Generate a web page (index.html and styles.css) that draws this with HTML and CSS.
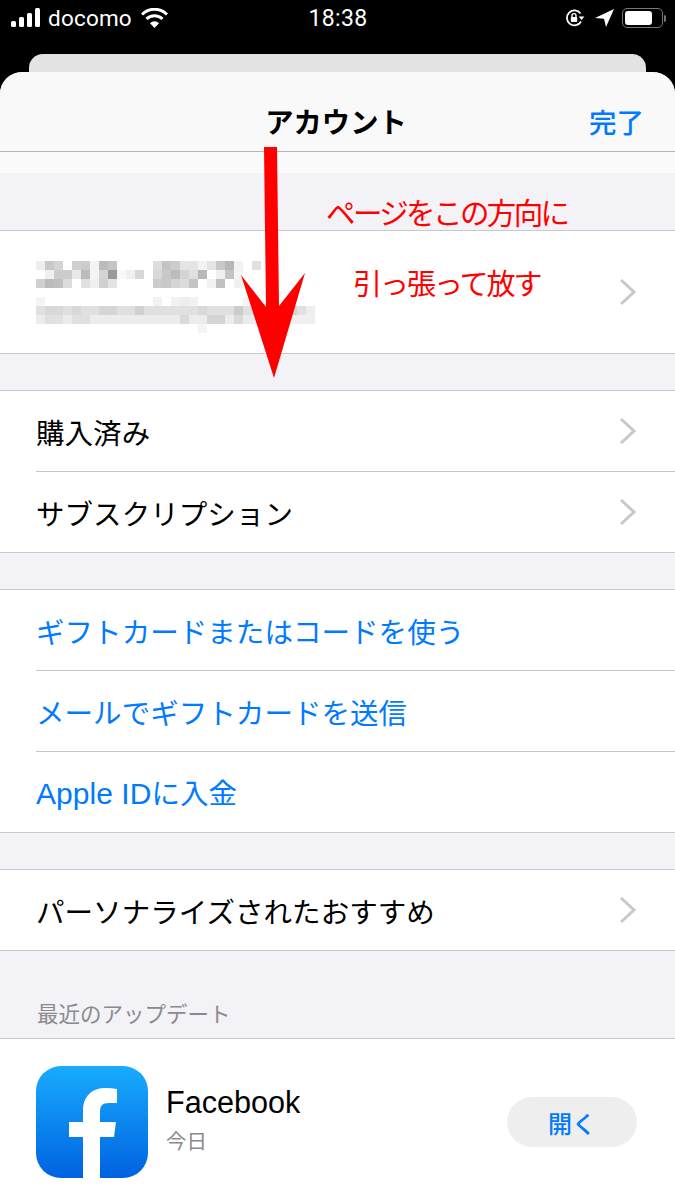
FILE: index.html
```html
<!DOCTYPE html>
<html lang="ja">
<head>
<meta charset="utf-8">
<title>アカウント</title>
<link rel="stylesheet" href="styles.css">
</head>
<body>
<div class="page">
  <header class="status">
    <div class="status-left">
      <svg class="signal" width="30" height="20" viewBox="0 0 30 20"><rect x="0" y="13" width="5" height="6" rx="1.5"/><rect x="8" y="9" width="5" height="10" rx="1.5"/><rect x="16" y="5" width="5" height="14" rx="1.5"/><rect x="24" y="0" width="5" height="19" rx="1.5"/></svg>
      <span class="carrier">docomo</span>
      <svg class="wifi" width="27" height="20" viewBox="0 0 27 20"><path d="M1 6.5a17.5 17.5 0 0 1 25 0" class="wifi-arc"/><path d="M5.500 11a11.500 11.500 0 0 1 16 0" class="wifi-arc"/><path d="M9 15.200a6 6 0 0 1 9 0L13.500 20z" class="wifi-dot"/></svg>
    </div>
    <div class="time">18:38</div>
    <div class="status-right">
      <svg width="20" height="20" viewBox="0 0 20 20"><path class="rot" d="M16 13.500A7.500 7.500 0 1 1 15.500 5.500"/><path d="M13.600 8.500h5.800l-2.900 3.600z" class="fill"/><rect x="5.800" y="9" width="6.400" height="5" rx=".8" class="fill"/><path class="rot thin" d="M7 9V7.600a2 2 0 0 1 4 0V9"/></svg>
      <svg width="20" height="20" viewBox="0 0 20 20"><path class="fill" d="M19 1L0 10l9 .8L11 19z"/></svg>
      <div class="battery"><div class="battery-level"></div></div>
      <div class="battery-nub"></div>
    </div>
  </header>
  <div class="back-card"></div>
  <main class="sheet">
    <div class="nav">
      <h1 class="nav-title">アカウント</h1>
      <span class="nav-done">完了</span>
    </div>
    <div class="strip"></div>

    <section class="group first-group">
      <div class="row account-row">
        <svg class="mosaic" width="324" height="72" viewBox="0 0 324 72" shape-rendering="crispEdges">
          <g>
            <rect x="0" y="0" width="9" height="9" fill="#eee"/><rect x="9" y="0" width="9" height="9" fill="#c8c8c8"/><rect x="18" y="0" width="9" height="9" fill="#d4d4d4"/><rect x="36" y="0" width="9" height="9" fill="#d0d0d0"/><rect x="45" y="0" width="9" height="9" fill="#ccc"/><rect x="54" y="0" width="9" height="9" fill="#f4f4f4"/><rect x="63" y="0" width="9" height="9" fill="#bbb"/><rect x="72" y="0" width="9" height="9" fill="#c4c4c4"/><rect x="117" y="0" width="9" height="9" fill="#ddd"/><rect x="126" y="0" width="9" height="9" fill="#c4c4c4"/><rect x="135" y="0" width="9" height="9" fill="#ccc"/><rect x="144" y="0" width="9" height="9" fill="#e4e4e4"/><rect x="153" y="0" width="9" height="9" fill="#e4e4e4"/><rect x="162" y="0" width="9" height="9" fill="#f2f2f2"/><rect x="171" y="0" width="9" height="9" fill="#e4e4e4"/><rect x="180" y="0" width="9" height="9" fill="#c8c8c8"/><rect x="189" y="0" width="9" height="9" fill="#b8b8b8"/><rect x="198" y="0" width="9" height="9" fill="#f2f2f2"/><rect x="216" y="0" width="9" height="9" fill="#e0e0e0"/>
            <rect x="9" y="9" width="9" height="9" fill="#f0f0f0"/><rect x="18" y="9" width="9" height="9" fill="#ccc"/><rect x="27" y="9" width="9" height="9" fill="#ccc"/><rect x="36" y="9" width="9" height="9" fill="#e8e8e8"/><rect x="45" y="9" width="9" height="9" fill="#bbb"/><rect x="54" y="9" width="9" height="9" fill="#f4f4f4"/><rect x="63" y="9" width="9" height="9" fill="#d4d4d4"/><rect x="72" y="9" width="9" height="9" fill="#9a9a9a"/><rect x="81" y="9" width="9" height="9" fill="#f8f8f8"/><rect x="90" y="9" width="9" height="9" fill="#f0f0f0"/><rect x="99" y="9" width="9" height="9" fill="#d8d8d8"/><rect x="117" y="9" width="9" height="9" fill="#d8d8d8"/><rect x="126" y="9" width="9" height="9" fill="#c8c8c8"/><rect x="135" y="9" width="9" height="9" fill="#bcbcbc"/><rect x="144" y="9" width="9" height="9" fill="#d4d4d4"/><rect x="153" y="9" width="9" height="9" fill="#e0e0e0"/><rect x="162" y="9" width="9" height="9" fill="#b8b8b8"/><rect x="180" y="9" width="9" height="9" fill="#f0f0f0"/><rect x="189" y="9" width="9" height="9" fill="#c4c4c4"/><rect x="198" y="9" width="9" height="9" fill="#f4f4f4"/>
            <rect x="0" y="18" width="9" height="9" fill="#d0d0d0"/><rect x="9" y="18" width="9" height="9" fill="#bbb"/><rect x="18" y="18" width="9" height="9" fill="#c0c0c0"/><rect x="27" y="18" width="9" height="9" fill="#dcdcdc"/><rect x="45" y="18" width="9" height="9" fill="#e0e0e0"/><rect x="54" y="18" width="9" height="9" fill="#f0f0f0"/><rect x="63" y="18" width="9" height="9" fill="#d0d0d0"/><rect x="72" y="18" width="9" height="9" fill="#e4e4e4"/><rect x="117" y="18" width="9" height="9" fill="#ccc"/><rect x="126" y="18" width="9" height="9" fill="#c8c8c8"/><rect x="135" y="18" width="9" height="9" fill="#d4d4d4"/><rect x="144" y="18" width="9" height="9" fill="#dcdcdc"/><rect x="153" y="18" width="9" height="9" fill="#c4c4c4"/><rect x="171" y="18" width="9" height="9" fill="#f2f2f2"/><rect x="180" y="18" width="9" height="9" fill="#c0c0c0"/><rect x="198" y="18" width="9" height="9" fill="#f0f0f0"/>
          </g>
          <g>
            <rect x="0" y="36" width="9" height="9" fill="#f4f4f4"/><rect x="117" y="36" width="9" height="9" fill="#f2f2f2"/><rect x="135" y="36" width="9" height="9" fill="#f2f2f2"/><rect x="144" y="36" width="9" height="9" fill="#eee"/><rect x="153" y="36" width="9" height="9" fill="#f2f2f2"/><rect x="207" y="36" width="9" height="9" fill="#f4f4f4"/>
            <rect x="0" y="45" width="279" height="9" fill="#e0e0e0"/><rect x="0" y="54" width="279" height="9" fill="#ececec"/>
            <rect x="9" y="45" width="18" height="9" fill="#d8d8d8"/><rect x="36" y="45" width="9" height="9" fill="#d8d8d8"/><rect x="63" y="45" width="18" height="9" fill="#d6d6d6"/><rect x="99" y="45" width="9" height="9" fill="#d0d0d0"/><rect x="162" y="45" width="9" height="9" fill="#d8d8d8"/><rect x="198" y="45" width="9" height="9" fill="#ccc"/><rect x="252" y="45" width="9" height="9" fill="#d4d4d4"/><rect x="270" y="45" width="9" height="9" fill="#eee"/>
            <rect x="9" y="54" width="18" height="9" fill="#e0e0e0"/><rect x="36" y="54" width="18" height="9" fill="#e0e0e0"/><rect x="144" y="54" width="9" height="9" fill="#dadada"/><rect x="171" y="54" width="18" height="9" fill="#d4d4d4"/><rect x="198" y="54" width="9" height="9" fill="#dadada"/><rect x="252" y="54" width="27" height="9" fill="#f0f0f0"/>
            <rect x="162" y="63" width="9" height="9" fill="#f4f4f4"/>
          </g>
        </svg>
        <svg class="chevron" width="18" height="28" viewBox="0 0 18 28"><path d="M2 2l13 12L2 26"/></svg>
      </div>
    </section>

    <section class="group">
      <div class="row"><span class="label">購入済み</span><svg class="chevron" width="18" height="28" viewBox="0 0 18 28"><path d="M2 2l13 12L2 26"/></svg></div>
      <div class="row"><span class="label">サブスクリプション</span><svg class="chevron" width="18" height="28" viewBox="0 0 18 28"><path d="M2 2l13 12L2 26"/></svg></div>
    </section>

    <section class="group">
      <div class="row"><span class="label link">ギフトカードまたはコードを使う</span></div>
      <div class="row"><span class="label link">メールでギフトカードを送信</span></div>
      <div class="row"><span class="label link"><span class="latin">Apple ID</span>に入金</span></div>
    </section>

    <section class="group">
      <div class="row"><span class="label">パーソナライズされたおすすめ</span><svg class="chevron" width="18" height="28" viewBox="0 0 18 28"><path d="M2 2l13 12L2 26"/></svg></div>
    </section>

    <h2 class="section-title">最近のアップデート</h2>
    <section class="updates">
      <div class="app">
        <svg class="app-icon" width="112" height="112" viewBox="0 0 112 112">
          <defs><linearGradient id="fb" x1="0" y1="0" x2="0" y2="1"><stop offset="0" stop-color="#18acfe"/><stop offset="1" stop-color="#0062e0"/></linearGradient></defs>
          <rect width="112" height="112" rx="25" fill="url(#fb)"/>
          <path fill="#fff" d="M47 112V71H33V56H47V45C47 30 56 22 70 22Q76 22 81 23V37H73C66 37 64 40 64 46V56H80L78 71H64V112Z"/>
        </svg>
        <div class="app-text">
          <div class="app-name">Facebook</div>
          <div class="app-date">今日</div>
        </div>
        <div class="open-btn">開く</div>
      </div>
    </section>
  </main>

  <p class="note note-one">ページをこの方向に</p>
  <p class="note note-two">引っ張って放す</p>
  <svg class="arrow" width="70" height="235" viewBox="0 0 70 235"><path d="M24 0H37L39 159L65 126L34 231L1 128L26 160Z"/></svg>
</div>
</body>
</html>
```
FILE: styles.css
```css
* { box-sizing: border-box; }
html, body { margin: 0; padding: 0; }
body {
  background: #000;
  font-family: "Noto Sans CJK JP", "Liberation Sans", sans-serif;
}
.page {
  position: relative;
  width: 675px;
  height: 1200px;
  overflow: hidden;
  display: flex;
  flex-direction: column;
}
.status {
  height: 54px;
  padding: 0 9px 18px 11px;
  display: grid;
  grid-template-columns: 1fr auto 1fr;
  align-items: center;
  color: #fff;
  flex: none;
}
.status-left { display: flex; align-items: center; gap: 7px; }
.signal { fill: #fff; }
.carrier { font: 400 22.500px "Roboto", sans-serif; letter-spacing: .2px; }
.wifi { margin-left: 2px; }
.wifi-arc { fill: none; stroke: #fff; stroke-width: 3; }
.wifi-dot { fill: #fff; }
.time { font: 400 23px "Roboto", sans-serif; letter-spacing: .3px; margin-left: -1px; }
.status-right { display: flex; align-items: center; justify-content: flex-end; gap: 10px; }
.rot { fill: none; stroke: #fff; stroke-width: 1.800; }
.rot.thin { stroke-width: 1.400; }
.fill { fill: #fff; }
.battery {
  width: 41px;
  height: 20px;
  border: 1.500px solid #777;
  border-radius: 5px;
  padding: 2px;
  margin-left: -3px;
}
.battery-level { width: 27px; height: 100%; background: #fff; border-radius: 3px; }
.battery-nub { width: 2px; height: 7px; background: #777; border-radius: 0 2px 2px 0; margin-left: -9px; }

.back-card {
  flex: none;
  height: 18px;
  margin: 0 29px;
  background: #e3e3e3;
  border-radius: 14px 14px 0 0;
}
.sheet {
  flex: 1;
  background: #f2f2f7;
  border-radius: 22px 22px 0 0;
  overflow: hidden;
}
.nav {
  height: 80px;
  background: #f9f9f9;
  border-bottom: 1px solid #b5b5b5;
  display: flex;
  align-items: flex-end;
  justify-content: center;
  position: relative;
  padding-bottom: 9px;
}
.nav-title {
  margin: 0 3px 0 0;
  font-size: 28.300px;
  font-weight: 700;
  line-height: 42px;
  color: #000;
}
.nav-done {
  position: absolute;
  right: 31px;
  bottom: 9px;
  font-size: 27.500px;
  font-weight: 500;
  line-height: 42px;
  color: #007aff;
}
.strip { height: 21px; background: #fbfbfb; }

.group {
  margin-top: 36px;
  background: #fff;
  border-top: 1px solid #c8c7cc;
  border-bottom: 1px solid #c8c7cc;
  padding-left: 36px;
}
.first-group { margin-top: 57px; }
.row {
  height: 81px;
  display: flex;
  align-items: center;
  justify-content: space-between;
  padding-right: 38px;
  border-bottom: 1px solid #c8c7cc;
}
.row:last-child { border-bottom: 0; height: 80px; }
.account-row { position: relative; }
.first-group .row { height: 122px; }
.mosaic { position: absolute; left: 0; top: 30px; }
.chevron { margin-left: auto; fill: none; stroke: #c7c7cc; stroke-width: 3; }
.label { font-size: 28.500px; line-height: 40px; color: #000; padding-top: 2px; letter-spacing: .05px; }
.link { color: #007aff; }
.latin { font-family: "Liberation Sans", sans-serif; font-size: 30px; }

.section-title {
  margin: 0;
  height: 87px;
  padding: 46px 0 0 37px;
  font-size: 21.500px;
  font-weight: 400;
  line-height: 32px;
  color: #8a8a8e;
}
.updates {
  background: #fff;
  border-top: 1px solid #c8c7cc;
  height: 200px;
  padding: 27px 38px 0 36px;
}
.app { display: flex; align-items: center; }
.app-icon { flex: none; }
.app-text { margin-left: 18px; flex: 1; margin-top: -5px; }
.app-name { font: 400 30.600px/40px "Liberation Sans", sans-serif; color: #000; }
.app-date { font-size: 20.500px; line-height: 34px; color: #8a8a8e; margin-top: 1px; }
.open-btn {
  width: 130px;
  height: 50px;
  border-radius: 25px;
  background: #eeeeee;
  color: #007aff;
  font-size: 24px;
  font-weight: 500;
  display: flex;
  align-items: center;
  justify-content: center;
}

.note {
  position: absolute;
  margin: 0;
  color: #ff0000;
  line-height: 40px;
  white-space: nowrap;
}
.note-one { left: 326px; top: 191px; font-size: 29.500px; letter-spacing: -2.600px; }
.note-two { left: 353px; top: 262px; font-size: 29px; letter-spacing: -2px; }
.arrow { position: absolute; left: 240px; top: 147px; fill: #ff0000; }
```
